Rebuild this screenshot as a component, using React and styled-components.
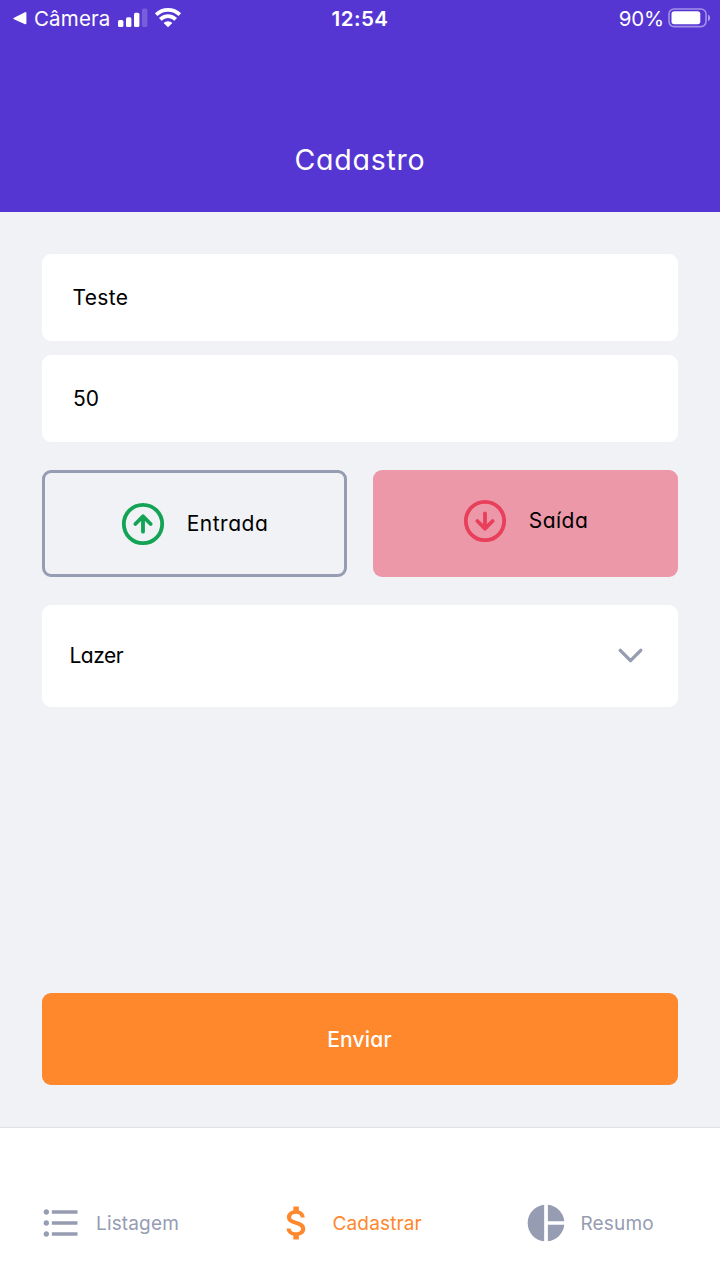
import React from 'react';
import styled, { createGlobalStyle, css } from 'styled-components';

const colors = {
  primary: '#5636d3',
  background: '#f0f2f5',
  shape: '#ffffff',
  text: '#969cb2',
  title: '#000000',
  secondary: '#ff872c',
  success: '#12a454',
  attention: '#e83f5b',
  attentionLight: '#ec98a8',
};

const GlobalStyle = createGlobalStyle`
  * { box-sizing: border-box; }
  body { margin: 0; background: ${colors.background}; }
`;

const Screen = styled.div`
  display: flex;
  flex-direction: column;
  width: 720px;
  height: 1280px;
  overflow: hidden;
  background: ${colors.background};
  font-family: Inter, 'Liberation Sans', sans-serif;
`;

const geometric = css`
  font-feature-settings: 'cv11' 1;
`;

const Header = styled.header`
  display: flex;
  flex-direction: column;
  height: 212px;
  background: ${colors.primary};
  color: #fff;
`;

const StatusBar = styled.div`
  display: grid;
  grid-template-columns: 1fr auto 1fr;
  align-items: center;
  height: 36px;
  padding: 0 9px 0 13px;
`;

const StatusSide = styled.div`
  display: flex;
  align-items: center;
  gap: ${(p) => (p.$end ? '4px' : '7px')};
  justify-content: ${(p) => (p.$end ? 'flex-end' : 'flex-start')};
`;

const StatusText = styled.span`
  font-size: 20.5px;
  line-height: 24px;
  letter-spacing: ${(p) => p.$spacing || '0'};
  padding-top: 1px;
`;

const Clock = styled.span`
  font-size: 20.5px;
  line-height: 24px;
  font-weight: 600;
  letter-spacing: 0.5px;
  padding: 1px 4px 0 0;
`;

const Title = styled.h1`
  ${geometric}
  margin: 105px 0 0;
  font-size: 28.5px;
  line-height: 37px;
  font-weight: 400;
  letter-spacing: 0.75px;
  text-align: center;
`;

const Form = styled.form`
  display: flex;
  flex-direction: column;
  flex: 1;
  padding: 42px;
`;

const Field = styled.div`
  ${geometric}
  display: flex;
  align-items: center;
  height: 87px;
  padding-left: ${(p) => p.$inset || '31px'};
  margin-bottom: 14px;
  border-radius: 9px;
  background: ${colors.shape};
  color: ${colors.title};
  font-size: 21px;
  letter-spacing: ${(p) => p.$spacing || '0'};
`;

const TypeRow = styled.div`
  display: grid;
  grid-template-columns: 305px 305px;
  justify-content: space-between;
  margin-top: 14px;
`;

const TypeButton = styled.button`
  ${geometric}
  display: flex;
  align-items: center;
  justify-content: center;
  gap: 21px;
  height: 107px;
  padding: ${(p) => (p.$active ? '0 1px 6px 0' : '0 1px 0 0')};
  border: ${(p) => (p.$active ? '0' : `3px solid ${colors.text}`)};
  border-radius: 9px;
  background: ${(p) => (p.$active ? colors.attentionLight : 'transparent')};
  color: ${colors.title};
  font-family: inherit;
  font-size: 21px;
  letter-spacing: 0.5px;
`;

const Select = styled.div`
  ${geometric}
  display: flex;
  align-items: center;
  justify-content: space-between;
  height: 102px;
  margin-top: 28px;
  padding: 0 27px 1px 27.5px;
  border-radius: 9px;
  background: ${colors.shape};
  color: ${colors.title};
  font-size: 21px;
  letter-spacing: -0.5px;
`;

const Submit = styled.button`
  ${geometric}
  height: 92px;
  margin-top: auto;
  border: 0;
  border-radius: 9px;
  background: ${colors.secondary};
  color: #fff;
  font-family: inherit;
  font-size: 21px;
  font-weight: 500;
  letter-spacing: 0.2px;
  padding: 0 1px 0 0;
`;

const TabBar = styled.nav`
  display: grid;
  grid-template-columns: repeat(3, 1fr);
  height: 153px;
  padding-top: 72px;
  border-top: 1px solid #dfe1e5;
  background: ${colors.shape};
`;

const Tab = styled.div`
  display: flex;
  align-items: center;
  height: 46px;
  gap: ${(p) => p.$gap};
  padding-left: ${(p) => p.$inset};
  color: ${(p) => (p.$active ? colors.secondary : colors.text)};
  font-size: 19px;
  letter-spacing: 0.15px;
`;

const Stroke = ({ size, color, children }) => (
  <svg width={size} height={size} viewBox="0 0 24 24" fill="none" stroke={color} strokeWidth="2" strokeLinecap="round" strokeLinejoin="round">
    {children}
  </svg>
);

const Solid = ({ children }) => (
  <svg width="44" height="44" viewBox="0 0 24 24" fill="currentColor">
    {children}
  </svg>
);

const BackArrow = () => (
  <svg width="14" height="14" viewBox="0 0 14 14" fill="#fff">
    <path d="M1 6.7 12 1.2q1.4-.5 1.4 1v10q0 1.5-1.4 1L1 8.3q-1.3-.8 0-1.6z" />
  </svg>
);

const Signal = () => (
  <svg width="30" height="20" viewBox="0 0 30 20" fill="#fff">
    <rect x="0" y="12" width="5.4" height="7" rx="1.6" />
    <rect x="8" y="9.3" width="5.4" height="9.7" rx="1.6" />
    <rect x="16" y="4.7" width="5.4" height="14.3" rx="1.6" />
    <rect x="24" y="0.5" width="5.4" height="18.5" rx="1.6" opacity=".2" />
  </svg>
);

const Wifi = () => (
  <svg width="27" height="20" viewBox="0 0 27 20" fill="none" stroke="#fff" strokeWidth="3.7">
    <path d="M1.2 6.7a17 17 0 0 1 23.6 0" />
    <path d="M5.3 11.4a10.8 10.8 0 0 1 15.4 0" />
    <path d="M8.6 15a6.3 6.3 0 0 1 8.8 0l-4.4 4.2z" fill="#fff" stroke="none" />
  </svg>
);

const Battery = () => (
  <svg width="43" height="20" viewBox="0 0 43 20">
    <rect x="1" y="1" width="37" height="17.6" rx="5" fill="none" stroke="#fff" strokeOpacity=".45" strokeWidth="1.6" />
    <rect x="3.5" y="3.3" width="28.8" height="13" rx="2.8" fill="#fff" />
    <path d="M40 6.6q2.2 1 2.2 3.3T40 13.2z" fill="#fff" opacity=".5" />
  </svg>
);

export default function App() {
  return (
    <Screen>
      <GlobalStyle />
      <Header>
        <StatusBar>
          <StatusSide>
            <BackArrow />
            <StatusText $spacing="0.15px">Câmera</StatusText>
            <Signal />
            <Wifi />
          </StatusSide>
          <Clock>12:54</Clock>
          <StatusSide $end>
            <StatusText $spacing="-0.2px">90%</StatusText>
            <Battery />
          </StatusSide>
        </StatusBar>
        <Title>Cadastro</Title>
      </Header>

      <Form as="main">
        <Field $inset="30.5px" $spacing="0.35px">Teste</Field>
        <Field>50</Field>
        <TypeRow>
          <TypeButton type="button">
            <Stroke size={46} color={colors.success}>
              <circle cx="12" cy="12" r="10" />
              <path d="m16 12-4-4-4 4M12 16V8" />
            </Stroke>
            Entrada
          </TypeButton>
          <TypeButton type="button" $active>
            <Stroke size={46} color={colors.attention}>
              <circle cx="12" cy="12" r="10" />
              <path d="m8 12 4 4 4-4M12 8v8" />
            </Stroke>
            Saída
          </TypeButton>
        </TypeRow>
        <Select>
          Lazer
          <Stroke size={41} color={colors.text}>
            <path d="m6 9 6 6 6-6" />
          </Stroke>
        </Select>
        <Submit type="button">Enviar</Submit>
      </Form>

      <TabBar>
        <Tab $inset="39px" $gap="13px">
          <Solid>
            <path d="M4 10.5c-.83 0-1.5.67-1.5 1.5s.67 1.5 1.5 1.5 1.5-.67 1.5-1.5-.67-1.5-1.5-1.5zm0-6c-.83 0-1.5.67-1.5 1.5S3.17 7.5 4 7.5 5.5 6.83 5.5 6 4.83 4.5 4 4.5zm0 12c-.83 0-1.5.68-1.5 1.5s.68 1.5 1.5 1.5 1.5-.68 1.5-1.5-.67-1.5-1.5-1.5zM7 19h14v-2H7v2zm0-6h14v-2H7v2zm0-8v2h14V5H7z" />
          </Solid>
          Listagem
        </Tab>
        <Tab $active $inset="35px" $gap="13.5px">
          <Solid>
            <path d="M11.8 10.9c-2.27-.59-3-1.2-3-2.15 0-1.09 1.01-1.85 2.7-1.85 1.78 0 2.44.85 2.5 2.1h2.21c-.07-1.72-1.12-3.3-3.21-3.81V3h-3v2.16c-1.94.42-3.5 1.68-3.5 3.61 0 2.31 1.91 3.46 4.7 4.13 2.5.6 3 1.48 3 2.41 0 .69-.49 1.79-2.7 1.79-2.06 0-2.87-.92-2.98-2.1h-2.2c.12 2.19 1.76 3.42 3.68 3.83V21h3v-2.15c1.95-.37 3.5-1.5 3.5-3.55 0-2.84-2.43-3.81-4.7-4.4z" />
          </Solid>
          Cadastrar
        </Tab>
        <Tab $inset="44px" $gap="12.5px">
          <Solid>
            <path d="M11 2v20c-5.07-.5-9-4.79-9-10s3.93-9.5 9-10zm2.03 0v8.99H22c-.47-4.74-4.24-8.52-8.97-8.99zm0 11.01V22c4.74-.47 8.5-4.25 8.97-8.99h-8.97z" />
          </Solid>
          Resumo
        </Tab>
      </TabBar>
    </Screen>
  );
}
